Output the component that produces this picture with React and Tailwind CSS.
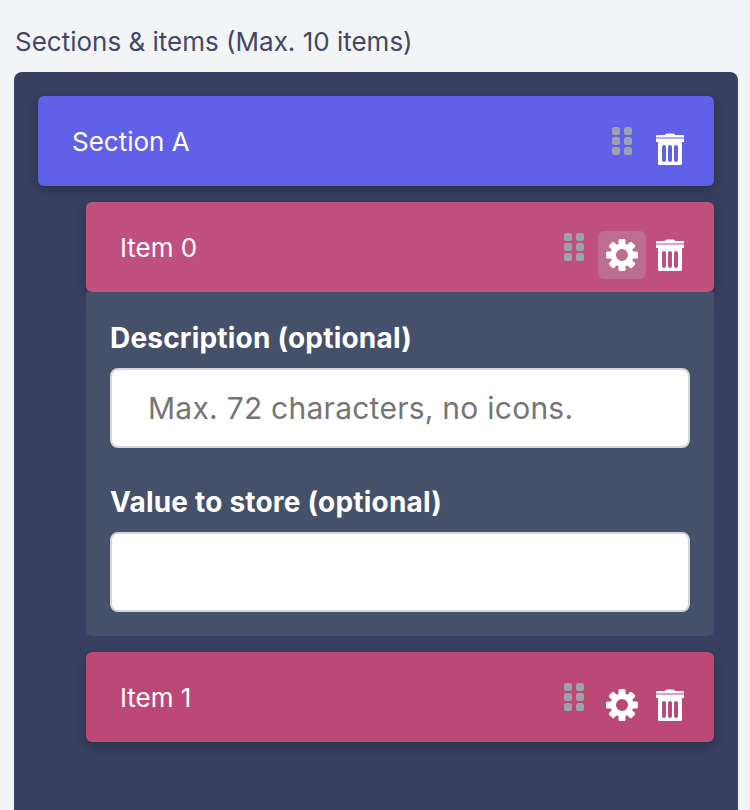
function Dots() {
  return (
    <svg width="20" height="29" viewBox="0 0 20 29" className="mt-[2px] mr-[14px] shrink-0" fill="#9ca3af">
      <rect x="0" y="0" width="8" height="8" rx="2.5" />
      <rect x="12" y="0" width="8" height="8" rx="2.5" />
      <rect x="0" y="10" width="8" height="8" rx="2.500" />
      <rect x="12" y="10" width="8" height="8" rx="2.5" />
      <rect x="0" y="20" width="8" height="8" rx="2.5" />
      <rect x="12" y="20" width="8" height="8" rx="2.5" />
    </svg>
  )
}

function Trash() {
  return (
    <button className="w-12 h-12 flex items-center justify-center">
      <svg width="28" height="32" viewBox="0 0 28 32" fill="white">
        <path d="M9 2 Q9 0.5 11 0.5 H17 Q19 0.5 19 2 H27 Q28 2 28 3 V4.500 H0 V3 Q0 2 1 2 Z" />
        <rect x="0" y="5.500" width="28" height="3.500" />
        <path fillRule="evenodd" d="M2 9 H26 V30.500 Q26 32 24.500 32 H3.500 Q2 32 2 30.500 Z M8 12 Q6 12 6 14 V27 Q6 29 8 29 Q10 29 10 27 V14 Q10 12 8 12 Z M14 12 Q12 12 12 14 V27 Q12 29 14 29 Q16 29 16 27 V14 Q16 12 14 12 Z M20 12 Q18 12 18 14 V27 Q18 29 20 29 Q22 29 22 27 V14 Q22 12 20 12 Z" />
      </svg>
    </button>
  )
}

function Cog({ active }) {
  const angles = [0, 45, 90, 135, 180, 225, 270, 315]
  return (
    <button className={`w-12 h-12 flex items-center justify-center rounded-md ${active ? 'bg-[#bd6c92]' : ''}`}>
      <svg width="32" height="32" viewBox="0 0 32 32" fill="white">
        {angles.map((a) => (
          <rect key={a} x="12.5" y="0" width="7" height="9" rx="1.5" transform={`rotate(${a} 16 16)`} />
        ))}
        <path fillRule="evenodd" d="M16 4.500 A11.500 11.500 0 1 1 16 27.500 A11.500 11.500 0 1 1 16 4.500 Z M16 10 A6 6 0 1 0 16 22 A6 6 0 1 0 16 10 Z" />
      </svg>
    </button>
  )
}

function Field({ label, placeholder }) {
  return (
    <div>
      <label className="block text-[28px] leading-[32px] tracking-[0.2px] font-bold text-white mb-[14px]">{label}</label>
      <input
        placeholder={placeholder}
        className="block w-full h-20 bg-white border-2 border-[#d1d5db] rounded-lg pl-[36px] text-[30px] tracking-[0.25px] text-[#111827] placeholder:text-[#757575] outline-none"
      />
    </div>
  )
}

function Row({ label, color, children }) {
  return (
    <div className={`h-[90px] rounded-md flex justify-between shadow-[0_4px_12px_rgba(0,0,0,0.25)] pl-[34px] pr-5 ${color}`}>
      <span className="self-center text-[26px] text-white">{label}</span>
      <div className="flex items-start pt-[29px]">{children}</div>
    </div>
  )
}

export default function App() {
  return (
    <div className="h-screen overflow-hidden bg-[#f3f4f6] pt-[26px] px-[12px] font-['Inter','Liberation_Sans',sans-serif]">
      <h2 className="ml-[3px] text-[26px] leading-[32px] text-[#424866] mb-[14px]">Sections &amp; items (Max. 10 items)</h2>
      <div className="ml-[2px] h-[780px] bg-[#374060] rounded-lg p-6">
        <Row label="Section A" color="bg-[#6060e8]">
          <Dots />
          <Trash />
        </Row>
        <div className="ml-12 mt-4">
          <Row label="Item 0" color="bg-[#c0507f]">
            <Dots />
            <Cog active />
            <Trash />
          </Row>
          <div className="bg-[#45516a] rounded-b-md px-6 pt-[30px] pb-6 flex flex-col gap-[38px]">
            <Field label="Description (optional)" placeholder="Max. 72 characters, no icons." />
            <Field label="Value to store (optional)" />
          </div>
          <div className="mt-4">
            <Row label="Item 1" color="bg-[#bc4876]">
              <Dots />
              <Cog />
              <Trash />
            </Row>
          </div>
        </div>
      </div>
    </div>
  )
}
